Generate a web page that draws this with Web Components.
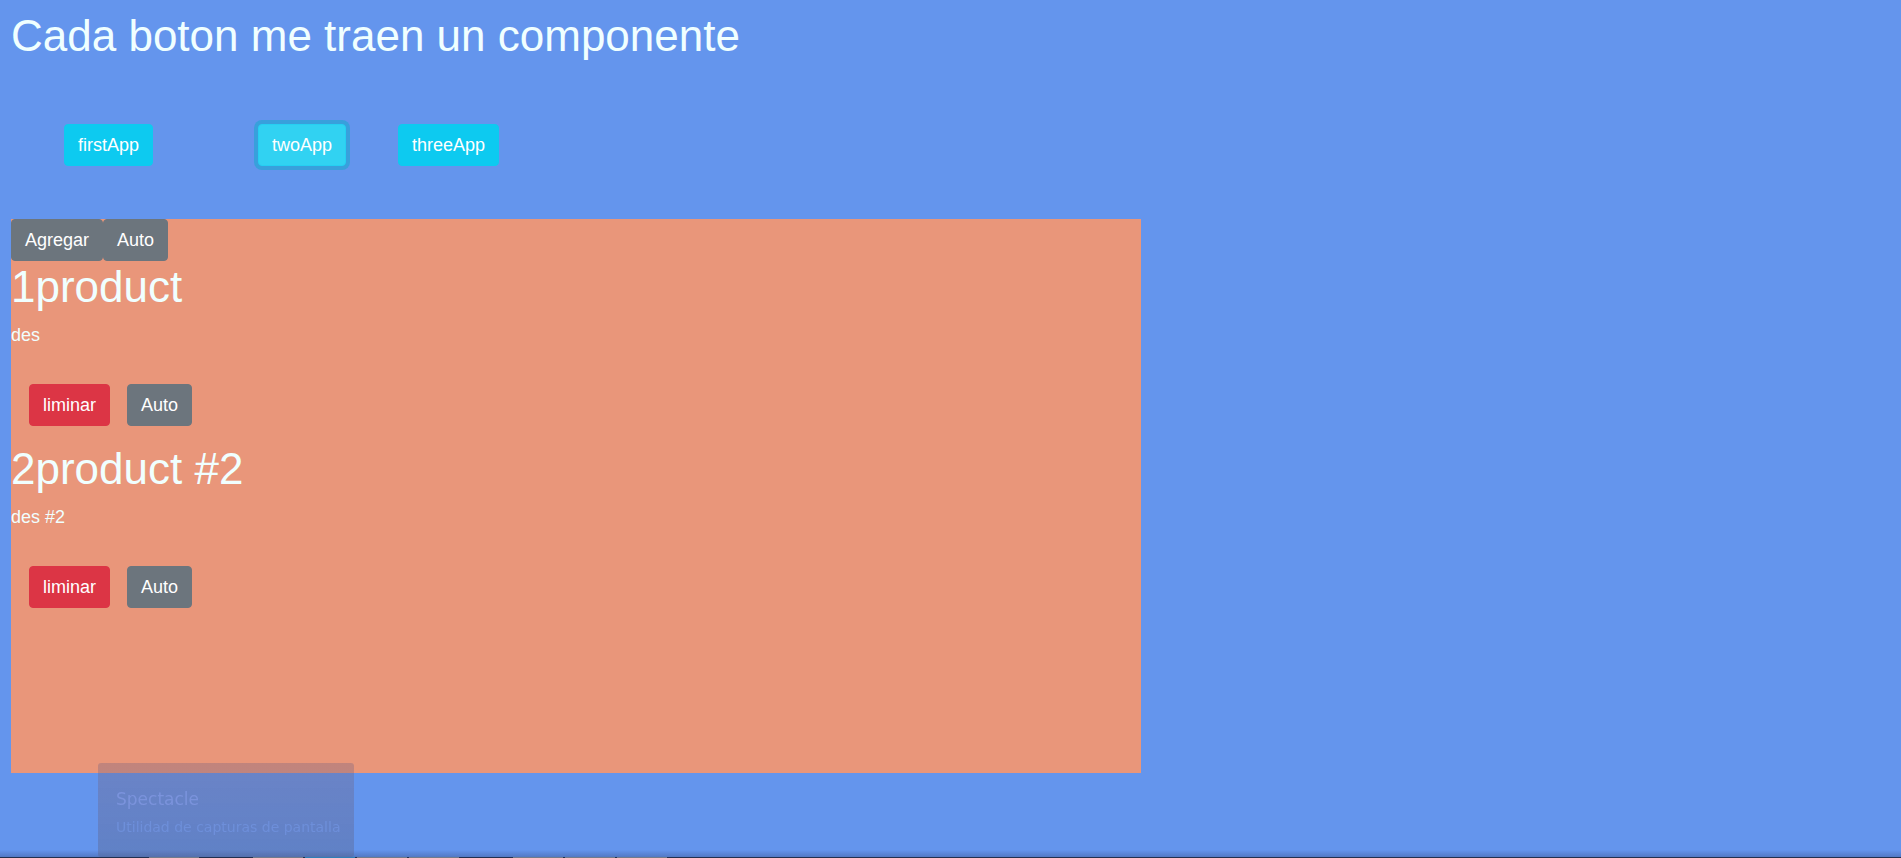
<!DOCTYPE html>
<html lang="es">
<head>
<meta charset="utf-8">
<title>Componentes</title>
<style>
html, body { margin: 0; min-height: 100%; background: cornflowerblue; }
body { font: 18px/26px "Liberation Sans", Arial, sans-serif; color: azure; }
</style>
</head>
<body>
<demo-app></demo-app>
<task-strip></task-strip>
<app-tooltip>
  <span slot="title">Spectacle</span>
  <span slot="text">Utilidad de capturas de pantalla</span>
</app-tooltip>
<script>
const define = (name, html) => {
  const template = document.createElement('template');
  template.innerHTML = html;
  customElements.define(name, class extends HTMLElement {
    constructor() {
      super();
      this.attachShadow({ mode: 'open' }).append(template.content.cloneNode(true));
    }
  });
};

define('ui-button', `
<style>
:host { display: inline-block; --bg: #6c757d; --edge: var(--bg); --ring: transparent; }
:host([kind="info"]) { --bg: #0dcaf0; }
:host([kind="danger"]) { --bg: #dc3545; }
:host([active]) { --bg: #31d2f2; --edge: #25cff2; --ring: rgba(11, 172, 204, .5); }
button {
  display: block; margin: 0; padding: 7px 13px; border: 1px solid var(--edge);
  border-radius: 4px; background: var(--bg); color: white;
  font: inherit; cursor: pointer; box-shadow: 0 0 0 4px var(--ring);
}
</style>
<button type="button"><slot></slot></button>`);

define('product-item', `
<style>
:host { display: block; }
h1 { margin: 0 0 10px; font-size: 44px; line-height: 51px; font-weight: 500; }
p { margin: 0 0 19px; }
div { display: flex; gap: 17px; padding: 17px 18px; }
</style>
<h1><slot name="name"></slot></h1>
<p><slot name="description"></slot></p>
<div><ui-button kind="danger">liminar</ui-button><ui-button>Auto</ui-button></div>`);

define('product-panel', `
<style>
:host { display: block; box-sizing: border-box; max-width: 1130px; min-height: 554px; background: darksalmon; }
div { display: flex; }
</style>
<div><ui-button>Agregar</ui-button><ui-button>Auto</ui-button></div>
<slot></slot>`);

define('demo-app', `
<style>
:host { display: block; padding: 9px 11px; }
h1 { margin: 0 0 9px; font-size: 44px; line-height: 53px; font-weight: 500; }
nav { display: flex; gap: 52px; padding: 53px; }
nav ui-button:first-child { margin-right: 53px; }
</style>
<h1>Cada boton me traen un componente</h1>
<nav>
  <ui-button kind="info">firstApp</ui-button>
  <ui-button kind="info" active>twoApp</ui-button>
  <ui-button kind="info">threeApp</ui-button>
</nav>
<product-panel>
  <product-item><span slot="name">1product</span><span slot="description">des</span></product-item>
  <product-item><span slot="name">2product #2</span><span slot="description">des #2</span></product-item>
</product-panel>`);

define('app-tooltip', `
<style>
:host {
  position: fixed; left: 98px; bottom: 1px; box-sizing: border-box; width: 256px; height: 94px;
  padding: 22px 18px; border-radius: 3px; white-space: nowrap;
  background: linear-gradient(rgba(120, 100, 130, .35), rgba(90, 100, 140, .4));
  font-family: "DejaVu Sans", sans-serif; color: #7b93dc;
}
strong, small { display: block; font-weight: 400; }
strong { font-size: 17px; line-height: 28px; }
small { font-size: 14px; line-height: 28px; color: #6e8fda; }
</style>
<strong><slot name="title"></slot></strong>
<small><slot name="text"></slot></small>`);

define('task-strip', `
<style>
:host {
  position: fixed; left: 0; right: 0; bottom: 0; height: 8px;
  display: flex; align-items: flex-end; gap: 2px; box-sizing: border-box; padding-left: 149px;
  background: linear-gradient(#22304e, #22304e) bottom / 100% 1px no-repeat,
    linear-gradient(transparent, rgba(50, 70, 120, .4));
}
i { width: 50px; height: 1px; background: #727b8a; }
.apart { margin-left: 52px; }
.current { background: #2f7fb5; }
</style>
<i></i><i class="apart"></i><i class="current"></i><i></i><i></i><i class="apart"></i><i></i><i></i>`);
</script>
</body>
</html>
